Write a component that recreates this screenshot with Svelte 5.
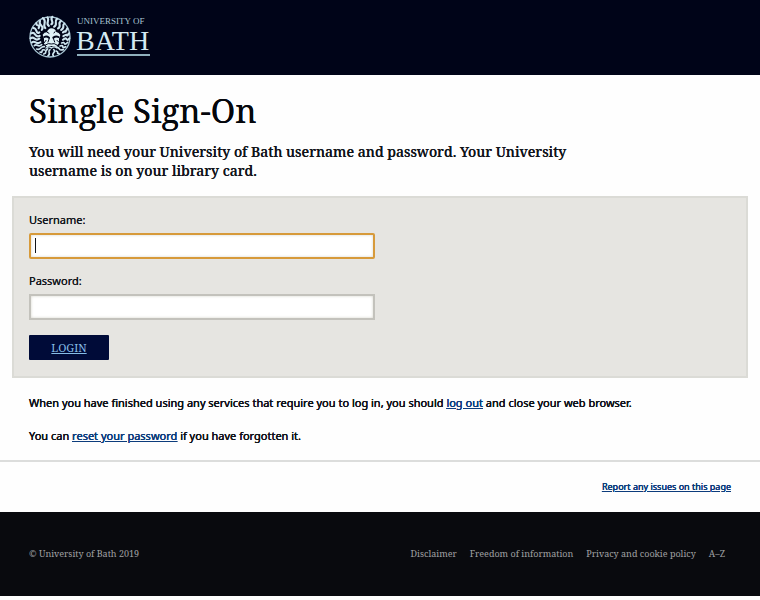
<script lang="ts">
  const footerLinks = ["Disclaimer", "Freedom of information", "Privacy and cookie policy", "A–Z"];

  let username = $state("");
  let password = $state("");
  let usernameFocused = $state(true);

  function autofocus(node: HTMLInputElement) {
    node.focus();
  }
</script>

<header>
  <a class="logo" href="#home" aria-label="University of Bath">
    <svg width="122" height="44" viewBox="0 0 122 44">
      <g transform="translate(0 1) scale(0.3333)" fill="none" stroke="#cfe6f0" stroke-linecap="round" stroke-linejoin="round">
        <circle cx="63" cy="63" r="60" stroke="#a9c8d6" stroke-width="4" />
        <!-- hair -->
        <g stroke-width="6" transform="translate(-4 -4) scale(1.06)">
          <path d="M50 38C40 30 57 20 43 10M60 32C49 24 64 17 56 8M67 27C77 22 61 14 70 6M75 34C87 28 73 21 83 12" />
          <path d="M40 43C50 31 28 31 35 18M31 38C38 27 21 33 25 24M86 39C98 31 83 26 94 18M95 43C108 34 95 32 104 25" />
          <path d="M33 50C23 58 27 36 16 38M34 60C20 69 23 45 10 53M33 68C19 78 20 58 8 67M100 50C112 42 103 56 112 39M101 61C118 49 106 68 117 53" />
          <path d="M36 78C24 87 21 70 12 79M100 71C114 59 107 80 118 67" />
        </g>
        <!-- beard -->
        <g stroke-width="5">
          <path d="M38 86C26 97 24 80 16 89M46 92C33 90 37 104 23 99M47 102C34 98 44 113 33 108M98 81C111 74 101 93 116 79M93 90C109 85 94 101 110 92" />
          <path d="M82 92C99 98 86 106 103 101M56 99C43 107 57 111 44 114M63 101C53 108 68 113 57 119M74 101C83 107 66 113 73 119M82 105C92 109 80 113 90 113" />
        </g>
        <!-- face -->
        <path d="M41 56Q47 48 54 49Q57 38 67 37Q79 38 82 48Q90 49 94 57L90 68L90 82L80 92L68 90L54 93L45 83L45 68Z" fill="#dff1f7" stroke="none" />
        <g stroke="#00051a">
          <path d="M46 63Q53 59 60 65M73 65Q81 59 88 63" stroke-width="6" />
          <path d="M61 67L57 78M73 67L77 78M49 87Q58 80 67 84Q75 80 84 87M59 92H76" stroke-width="3" />
          <path d="M51 73L45 81M84 73L90 79M55 49L60 52M78 47L75 51" stroke-width="3" />
        </g>
        <path d="M51 96Q60 89 67 96Q75 89 84 96" stroke-width="4" />
      </g>
      <text class="small-name" x="48" y="9">UNIVERSITY OF</text>
      <text class="big-name" x="47" y="35">BATH</text>
      <path d="M48 40H121" stroke="#8fb0bd" stroke-width="2" />
    </svg>
  </a>
</header>

<main>
  <div class="intro">
    <h1>Single Sign-On</h1>
    <h2>You will need your University of Bath username and password. Your University username is on your library card.</h2>
  </div>

  <form onsubmit={(e) => e.preventDefault()}>
    <label for="username">Username:</label>
    <div class="field">
      <input
        id="username"
        type="text"
        bind:value={username}
        class:active={usernameFocused}
        onfocus={() => (usernameFocused = true)}
        onblur={() => (usernameFocused = false)}
        use:autofocus
      />
      {#if usernameFocused && !username}
        <span class="caret"></span>
      {/if}
    </div>
    <label for="password">Password:</label>
    <div class="field">
      <input id="password" type="password" bind:value={password} />
    </div>
    <button type="submit">LOGIN</button>
  </form>

  <div class="notes">
    <p>When you have finished using any services that require you to log in, you should <a href="#logout">log out</a> and close your web browser.</p>
    <p>You can <a href="#reset">reset your password</a> if you have forgotten it.</p>
  </div>
</main>

<div class="report">
  <a href="#report">Report any issues on this page</a>
</div>

<footer>
  <p>© University of Bath 2019</p>
  <nav>
    {#each footerLinks as link}
      <a href="#footer">{link}</a>
    {/each}
  </nav>
</footer>

<style>
  :global(body) {
    background: #fefefe;
    color: #11141b;
    font-family: "Noto Sans", sans-serif;
    font-size: 11px;
    font-weight: 400;
  }
  header {
    box-sizing: border-box;
    height: 75px;
    padding: 15px 29px;
    background: #000418;
  }
  .logo,
  .logo svg {
    display: block;
    width: 122px;
  }
  .logo text {
    font-family: "Liberation Serif", serif;
    font-weight: 400;
    fill: #d5eaf3;
  }
  .logo .small-name {
    font-size: 9px;
    fill: #a9c5d3;
  }
  .logo .big-name {
    font-size: 28px;
  }
  .intro {
    padding: 13px 29px 16px;
  }
  h1,
  h2 {
    margin: 0;
    font-family: "Noto Serif", "Liberation Serif", serif;
  }
  h1 {
    font-size: 33px;
    line-height: 46px;
    font-weight: 400;
    color: #05070c;
  }
  h2 {
    max-width: 580px;
    margin-top: 8px;
    font-size: 14px;
    line-height: 19px;
    font-weight: 500;
  }
  h1,
  h2,
  label,
  .notes,
  .report {
    text-shadow: 0 0 0 currentColor;
  }
  form {
    margin: 0 12px;
    padding: 14px 15px 16px;
    border: 2px solid #dbdbd6;
    background: #e6e5e1;
  }
  label {
    display: block;
    line-height: 16px;
    margin-bottom: 5px;
  }
  .field {
    position: relative;
    max-width: 346px;
    margin-bottom: 14px;
  }
  .field + button {
    margin-top: 15px;
  }
  input {
    display: block;
    box-sizing: border-box;
    width: 100%;
    height: 26px;
    padding: 2px 6px;
    border: 2px solid #c3c2bc;
    background: #fff;
    box-shadow: inset 0 0 3px #d5d3c8;
    font: inherit;
    outline: none;
  }
  input.active {
    border-color: #d79a3a;
    border-radius: 2px;
    caret-color: transparent;
  }
  .caret {
    position: absolute;
    left: 6px;
    top: 5px;
    width: 1px;
    height: 15px;
    background: #11141b;
    pointer-events: none;
  }
  button {
    display: block;
    width: 80px;
    height: 25px;
    padding: 0;
    border: 0;
    border-radius: 1px;
    background: #000b38;
    color: #86bde6;
    font-family: "Noto Serif", "Liberation Serif", serif;
    font-size: 11px;
    text-decoration: underline;
    cursor: pointer;
  }
  .notes {
    padding: 16px 29px;
  }
  p {
    margin: 0;
  }
  .notes p {
    line-height: 17px;
  }
  .notes p + p {
    margin-top: 16px;
  }
  .notes,
  .report {
    text-shadow: 0 0 0 currentColor, 0 0 0 currentColor;
  }
  .notes a,
  .report a {
    color: #0c3c7c;
    text-shadow: 0 0 0 currentColor, 0 0 0 currentColor;
  }
  .report {
    padding: 17px 29px;
    border-top: 2px solid #dcdddc;
    font-size: 9px;
    line-height: 16px;
    text-align: right;
  }
  footer {
    display: flex;
    align-items: center;
    justify-content: space-between;
    padding: 34px 35px 34px 29px;
    margin-bottom: 4px;
    background: #090a0e;
    color: #a0a1a3;
    font-family: "Noto Serif", "Liberation Serif", serif;
    font-size: 9px;
    font-weight: 400;
    line-height: 16px;
  }
  nav {
    display: flex;
    gap: 13px;
  }
  nav a {
    color: inherit;
    text-decoration: none;
  }
</style>
